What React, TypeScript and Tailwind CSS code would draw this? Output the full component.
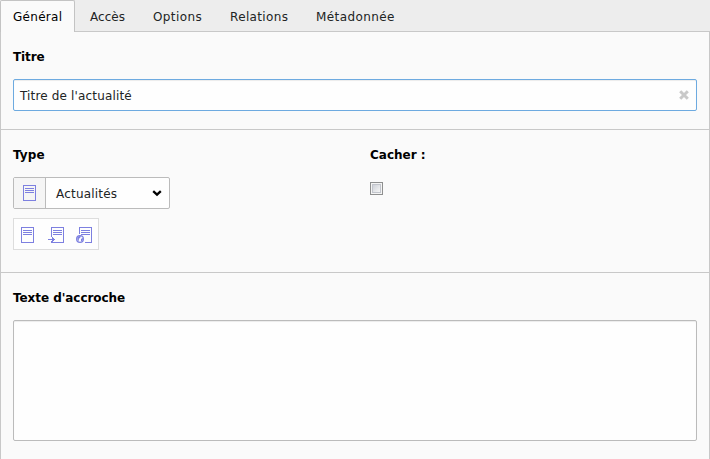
import React from "react";

function DocIcon({ variant }: { variant?: "arrow" | "globe" }) {
  return (
    <svg width="16" height="16" viewBox="0 0 16 16" fill="none" stroke="#7d80e0" shapeRendering="crispEdges" className="block shrink-0">
      {!variant && <path d="M1.5 .5h12v15h-12z" />}
      {variant === "arrow" && (
        <>
          <path d="M3.5 10V.5h12v15h-12V14" />
          <path d="M0 12.5h7M4.5 10v5M5.500 11v3" />
        </>
      )}
      {variant === "globe" && (
        <>
          <path d="M3.5 7V.5h12v15H9" />
          <g shapeRendering="geometricPrecision">
            <circle cx="4" cy="12" r="3.4" strokeWidth="1.2" />
            <path d="M1.200 10.500L3 9l2 .3-1 1.700-1.200.8L3 14l-1.500-1zM5 12l2-1.200-.3 2.700L5 14.500z" fill="#7d80e0" stroke="none" />
          </g>
        </>
      )}
      <path d={variant ? "M5 3.5h9M5 5.5h9M5 7.5h9" : "M3 3.5h9M3 5.5h9M3 7.5h9"} />
    </svg>
  );
}

const tabs = [
  { label: "Accès", cls: "w-[63px] tracking-[0.05px]" },
  { label: "Options", cls: "w-[77px] tracking-[0.4px]" },
  { label: "Relations", cls: "w-[86px] tracking-[0.35px]" },
  { label: "Métadonnée", cls: "w-[100px] tracking-[0.4px]" },
];

export default function App() {
  return (
    <div className="flex h-[459px] w-[710px] flex-col bg-[#ededed] font-['DejaVu_Sans',Verdana,sans-serif] text-[12px] leading-[18px] text-[#212424]">
      <nav className="flex h-8 shrink-0 rounded-tr-sm border-b border-[#c8c8c8]">
        <button className="-mb-px h-8 w-[75px] shrink-0 rounded-t-[2px] border border-b-0 border-[#c3c3c3] bg-[#fafafa] pl-3 text-left tracking-[0.3px] text-black">
          Général
        </button>
        <div className="flex pl-[15px]">
          {tabs.map((t) => (
            <button key={t.label} className={`${t.cls} h-8 pt-px text-left`}>{t.label}</button>
          ))}
        </div>
      </nav>
      <main className="flex flex-1 flex-col border-x border-[#c8c8c8] bg-[#fafafa]">
        <section className="h-[98px] border-b border-[#c8c8c8] px-3 pt-4">
          <label className="block font-bold tracking-[-0.1px] text-black">Titre</label>
          <div className="mt-[13px] flex h-8 items-center justify-between rounded-[2px] border border-[#6daae0] bg-[#fefefe] pr-[7px] pl-[6px] shadow-[inset_0_1px_1px_rgba(0,0,0,0.075)]">
            <span className="pt-0.5 tracking-[0.16px]">Titre de l'actualité</span>
            <svg width="10" height="10" viewBox="0 0 10 10" stroke="#c9c9c9" strokeWidth="3"><path d="M1.2 1.2l7.6 7.6M8.800 1.200L1.200 8.800" /></svg>
          </div>
        </section>
        <section className="flex h-[143px] border-b border-[#c8c8c8] px-3 pt-4">
          <div className="w-[357px]">
            <label className="block font-bold tracking-[0.1px] text-black">Type</label>
            <div className="mt-[13px] flex h-8 w-[157px] rounded-[2px] border border-[#bbb] bg-[#fefefe]">
              <div className="flex w-8 items-center border-r border-[#bbb] bg-[#f5f5f5] pl-2"><DocIcon /></div>
              <div className="flex flex-1 items-center justify-between pr-[7px] pl-[10px]">
                <span className="pt-0.5 tracking-[0.2px]">Actualités</span>
                <svg width="10" height="7" viewBox="0 0 10 7" fill="none" stroke="#000" strokeWidth="2.3"><path d="M1.200 1.200L5 4.700l3.800-3.500" /></svg>
              </div>
            </div>
            <div className="mt-[9px] flex h-8 w-[86px] items-center gap-3 border border-[#ddd] bg-[#fefefe] pt-0.5 pl-[6px]">
              <DocIcon />
              <DocIcon variant="arrow" />
              <DocIcon variant="globe" />
            </div>
          </div>
          <div>
            <label className="block font-bold text-black">Cacher :</label>
            <div className="mt-[18px] h-[13px] w-[13px] border border-[#8e8f8f] bg-[#f4f4f4] p-px">
              <div className="h-[9px] w-[9px] border border-[#c2c5cc] bg-linear-to-br from-[#cfd2d9] to-[#f6f6f6]" />
            </div>
          </div>
        </section>
        <section className="px-3 pt-4">
          <label className="block font-bold tracking-[-0.06px] text-black">Texte d'accroche</label>
          <div className="mt-[13px] h-[121px] rounded-[2px] border border-[#bbb] bg-[#fefefe] shadow-[inset_0_1px_1px_rgba(0,0,0,0.075)]" />
        </section>
      </main>
    </div>
  );
}
